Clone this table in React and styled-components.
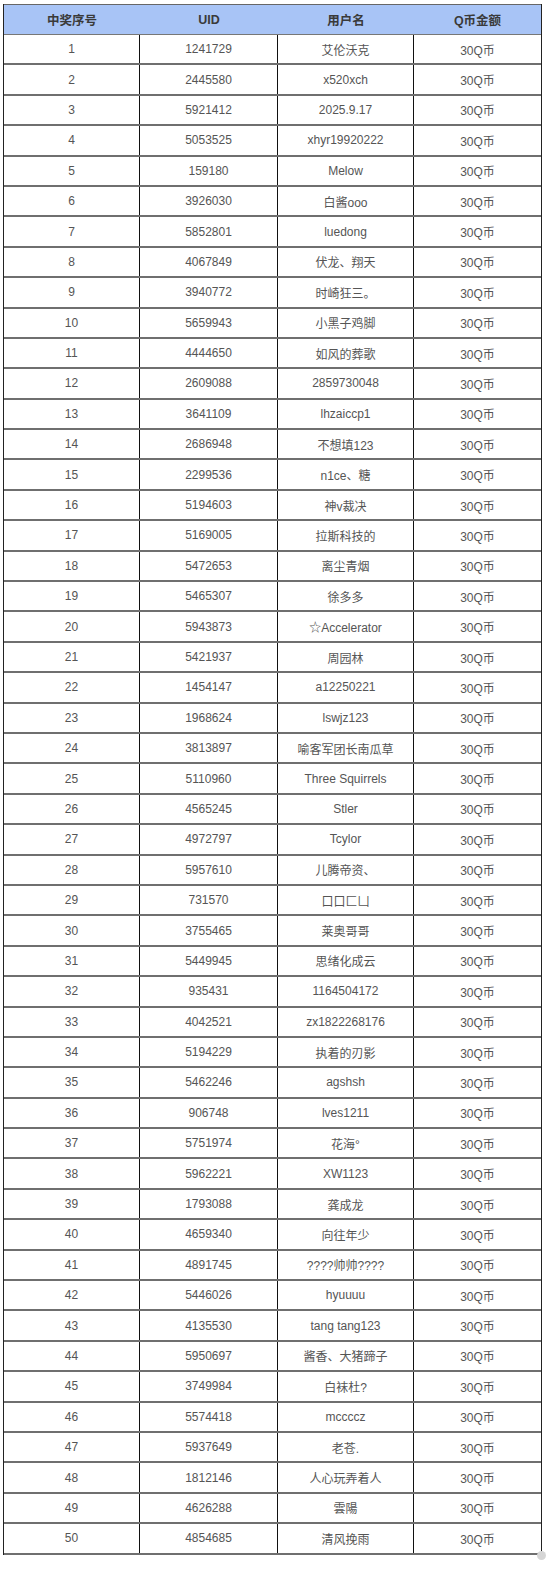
import React from "react";
import styled, { createGlobalStyle } from "styled-components";

const Global = createGlobalStyle`
  html, body { margin: 0; padding: 0; background: #fff; }
  body { font-family: "Liberation Sans", "Noto Sans CJK SC", Arial, sans-serif; }
`;

const data = [
  ["1241729", "艾伦沃克"],
  ["2445580", "x520xch"],
  ["5921412", "2025.9.17"],
  ["5053525", "xhyr19920222"],
  ["159180", "Melow"],
  ["3926030", "白酱ooo"],
  ["5852801", "luedong"],
  ["4067849", "伏龙、翔天"],
  ["3940772", "时崎狂三。"],
  ["5659943", "小黑子鸡脚"],
  ["4444650", "如风的葬歌"],
  ["2609088", "2859730048"],
  ["3641109", "lhzaiccp1"],
  ["2686948", "不想填123"],
  ["2299536", "n1ce、糖"],
  ["5194603", "神v裁决"],
  ["5169005", "拉斯科技的"],
  ["5472653", "离尘青烟"],
  ["5465307", "徐多多"],
  ["5943873", "☆Accelerator"],
  ["5421937", "周园林"],
  ["1454147", "a12250221"],
  ["1968624", "lswjz123"],
  ["3813897", "喻客军团长南瓜草"],
  ["5110960", "Three Squirrels"],
  ["4565245", "Stler"],
  ["4972797", "Tcylor"],
  ["5957610", "儿腾帝资、"],
  ["731570", "口口匚凵"],
  ["3755465", "莱奥哥哥"],
  ["5449945", "思绪化成云"],
  ["935431", "1164504172"],
  ["4042521", "zx1822268176"],
  ["5194229", "执着的刃影"],
  ["5462246", "agshsh"],
  ["906748", "lves1211"],
  ["5751974", "花海°"],
  ["5962221", "XW1123"],
  ["1793088", "龚成龙"],
  ["4659340", "向往年少"],
  ["4891745", "????帅帅????"],
  ["5446026", "hyuuuu"],
  ["4135530", "tang tang123"],
  ["5950697", "酱香、大猪蹄子"],
  ["3749984", "白袜杜?"],
  ["5574418", "mccccz"],
  ["5937649", "老苍."],
  ["1812146", "人心玩弄着人"],
  ["4626288", "雲陽"],
  ["4854685", "清风挽雨"],
];

const Page = styled.div`
  position: relative;
  padding: 4px 0 0 3px;
  width: 548px;
  height: 1570px;
  box-sizing: border-box;
`;

const Table = styled.div`
  width: 539px;
  border-left: 1px solid #222;
  border-right: 1px solid #222;
  box-sizing: border-box;
`;

const cols = "136px 138px 136px 1fr";

const HeaderRow = styled.div`
  display: grid;
  grid-template-columns: ${cols};
  height: 31px;
  background: #a8c4f6;
  border-top: 1px solid #666;
  border-bottom: 1px solid #777;
  box-sizing: border-box;
`;

const HeadCell = styled.div`
  display: flex;
  align-items: center;
  justify-content: center;
  font-size: 12.5px;
  font-weight: bold;
  color: #3a3a3a;
`;

const Row = styled.div`
  display: grid;
  grid-template-columns: ${cols};
  height: 30.4px;
  border-bottom: 2px solid #6f6f6f;
  box-sizing: border-box;
`;

const Cell = styled.div`
  display: flex;
  align-items: center;
  justify-content: center;
  font-size: 12px;
  color: #555;
  white-space: nowrap;
  border-right: ${(p) => (p.$last ? "none" : "1px solid #111")};
`;

const Handle = styled.div`
  position: absolute;
  left: 537px;
  top: 1551px;
  width: 9px;
  height: 9px;
  border-radius: 50%;
  background: #d6d6d6;
`;

export default function App() {
  return (
    <Page>
      <Global />
      <Table>
        <HeaderRow>
          <HeadCell>中奖序号</HeadCell>
          <HeadCell>UID</HeadCell>
          <HeadCell>用户名</HeadCell>
          <HeadCell>Q币金额</HeadCell>
        </HeaderRow>
        {data.map(([uid, name], i) => (
          <Row key={i}>
            <Cell>{i + 1}</Cell>
            <Cell>{uid}</Cell>
            <Cell>{name}</Cell>
            <Cell $last>30Q币</Cell>
          </Row>
        ))}
      </Table>
      <Handle />
    </Page>
  );
}
